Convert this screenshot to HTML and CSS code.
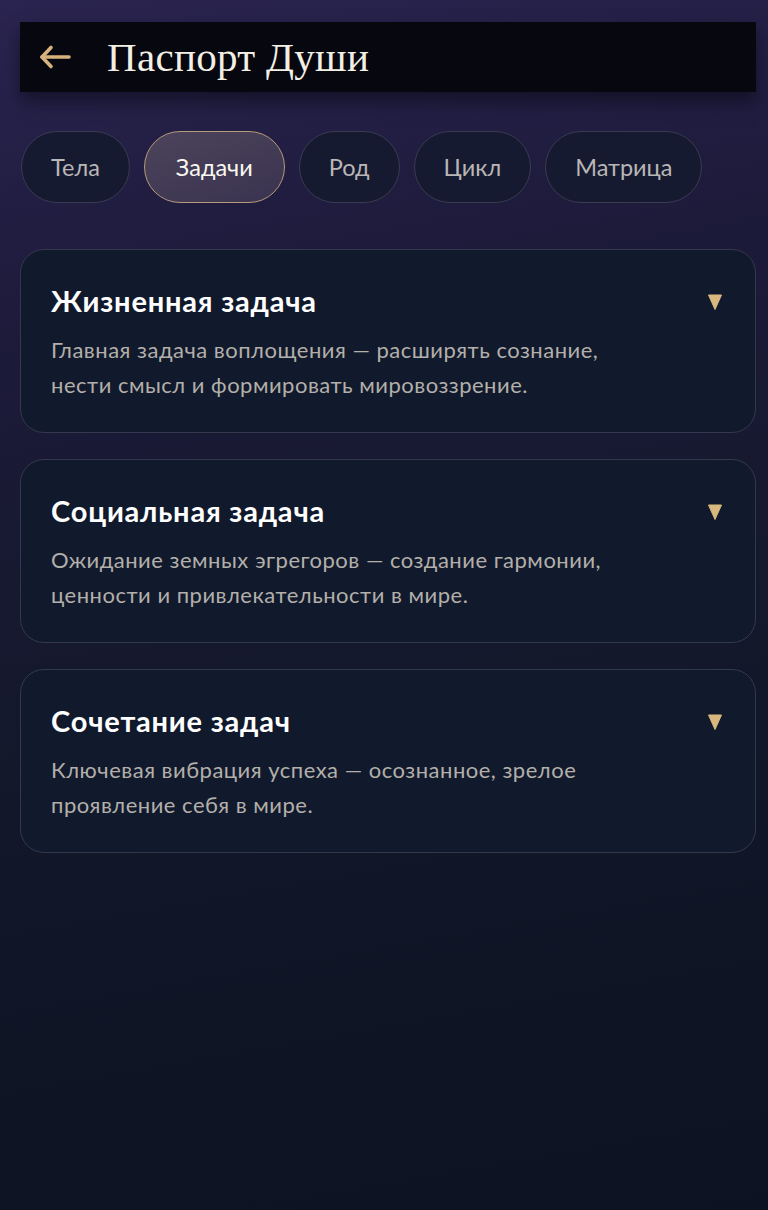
FILE: index.html
```html
<!DOCTYPE html>
<html lang="ru">
<head>
  <meta charset="UTF-8" />
  <meta name="viewport" content="width=device-width, initial-scale=1.0"/>
  <title>Паспорт Души</title>
  <link rel="stylesheet" href="styles.css">
</head>
<body>

  <header class="topbar">
    <button class="back" aria-label="Назад">
      <svg width="34" height="26" viewBox="0 0 34 26" fill="none" stroke="#d6b27c" stroke-width="3.6" stroke-linecap="round" stroke-linejoin="round">
        <path d="M31 13H4"/>
        <path d="M13 3.5L4 13l9 9.5"/>
      </svg>
    </button>
    <h1>Паспорт Души</h1>
  </header>

  <nav class="tabs">
    <button class="tab">Тела</button>
    <button class="tab active">Задачи</button>
    <button class="tab">Род</button>
    <button class="tab">Цикл</button>
    <button class="tab">Матрица</button>
  </nav>

  <main class="cards">
    <section class="card">
      <div class="card-head">
        <h2>Жизненная задача</h2>
        <svg class="caret" width="14" height="16" viewBox="0 0 14 16"><path d="M0.5 1h13L7 15.5z" fill="#d8b87e" stroke="#d8b87e" stroke-linejoin="round"/></svg>
      </div>
      <p>Главная задача воплощения — расширять сознание, нести смысл и формировать мировоззрение.</p>
    </section>

    <section class="card">
      <div class="card-head">
        <h2>Социальная задача</h2>
        <svg class="caret" width="14" height="16" viewBox="0 0 14 16"><path d="M0.5 1h13L7 15.5z" fill="#d8b87e" stroke="#d8b87e" stroke-linejoin="round"/></svg>
      </div>
      <p>Ожидание земных эгрегоров — создание гармонии, ценности и привлекательности в мире.</p>
    </section>

    <section class="card">
      <div class="card-head">
        <h2>Сочетание задач</h2>
        <svg class="caret" width="14" height="16" viewBox="0 0 14 16"><path d="M0.5 1h13L7 15.5z" fill="#d8b87e" stroke="#d8b87e" stroke-linejoin="round"/></svg>
      </div>
      <p>Ключевая вибрация успеха — осознанное, зрелое проявление себя в мире.</p>
    </section>
  </main>

</body>
</html>
```

FILE: styles.css
```css
html {
  min-height: 100%;
  background: linear-gradient(170deg, #2a2450 0%, #1d1a3a 25%, #121829 60%, #0d1222 100%);
}
body {
  margin: 0;
  padding: 22px 12px 0 20px;
  min-height: 1188px;
  font-family: 'Lato', 'Noto Sans', sans-serif;
  color: #f2efe9;
}
.topbar {
  display: flex;
  align-items: center;
  height: 70px;
  background: #06070f;
  box-shadow: 0 10px 16px rgba(6, 7, 15, 0.5);
  padding-left: 18px;
}
.back {
  background: none;
  border: none;
  padding: 0;
  width: 36px;
  height: 30px;
  display: flex;
  align-items: center;
  cursor: pointer;
}
.topbar h1 {
  margin: 0 0 0 33px;
  font-family: 'Liberation Serif', 'DejaVu Serif', serif;
  font-weight: normal;
  font-size: 41px;
  color: #f4efe4;
  letter-spacing: 0.3px;
}
.tabs {
  display: flex;
  gap: 14px;
  margin-top: 39px;
  padding-left: 1px;
}
.tab {
  height: 72px;
  padding: 0 29px;
  border-radius: 36px;
  border: 1.5px solid #3a3a52;
  background: #161a30;
  color: #b9b6b6;
  font-family: 'Lato', 'Noto Sans', sans-serif;
  font-size: 23.5px;
  cursor: pointer;
}
.tab.active {
  padding: 0 31px;
  background: linear-gradient(160deg, #4c445b 0%, #3a3350 100%);
  border-color: #b79a7a;
  color: #fbf8f2;
}
.cards {
  display: flex;
  flex-direction: column;
  gap: 26px;
  margin-top: 46px;
  width: 736px;
}
.card {
  box-sizing: border-box;
  height: 184px;
  padding: 33px 33px 0 30px;
  border-radius: 24px;
  border: 1.5px solid #34384c;
  background: #111a2c;
}
.card-head {
  display: flex;
  justify-content: space-between;
  align-items: center;
}
.card h2 {
  margin: 0;
  font-size: 29px;
  font-weight: bold;
  letter-spacing: 0.8px;
  color: #ffffff;
}
.caret {
  margin-top: 3px;
}
.card p {
  margin: 14px 0 0 0;
  font-size: 22px;
  line-height: 35px;
  letter-spacing: 0.5px;
  color: #b3afaa;
  max-width: 600px;
}
```
